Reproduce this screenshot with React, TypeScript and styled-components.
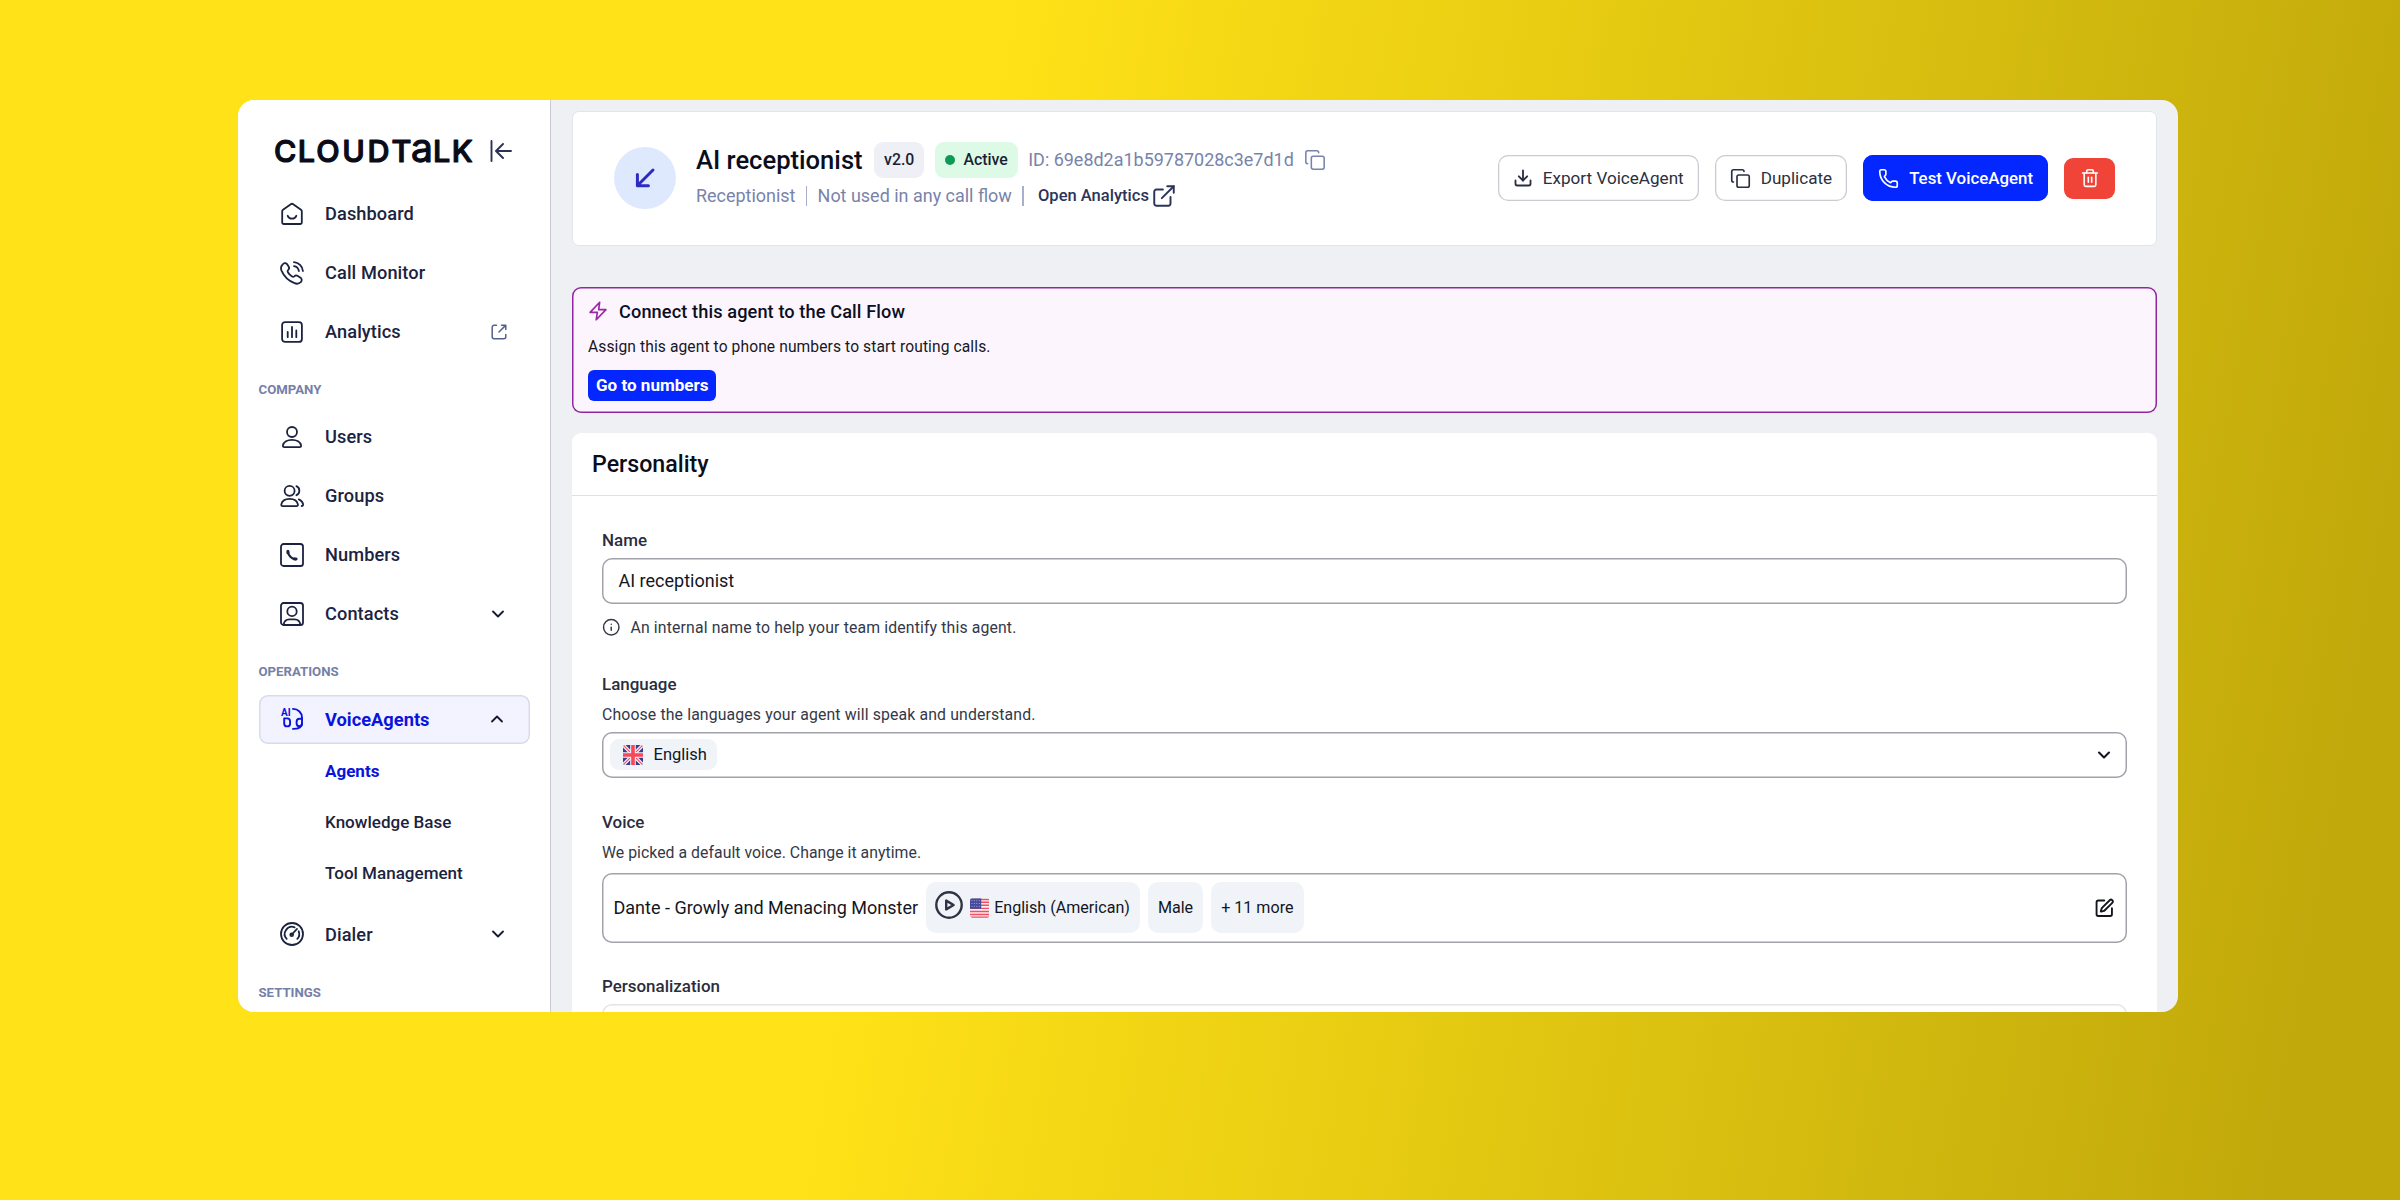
import React from "react";
import styled, { createGlobalStyle, css } from "styled-components";
import { Copy, ChevronDown, ChevronUp, Download, ExternalLink, Info, Phone, SquarePen, Trash2 } from "lucide-react";

const GlobalStyle = createGlobalStyle`
  * { box-sizing: border-box; }
  html, body { margin: 0; padding: 0; }
  body { font-family: Roboto, "Liberation Sans", sans-serif; color: #1c2340; }
  svg { display: block; flex: none; }
  button { font-family: inherit; margin: 0; }
`;

const Backdrop = styled.div`
  width: 2400px;
  height: 1200px;
  padding: 100px 222px 188px 238px;
  background: linear-gradient(100deg, #ffe217 38.5%, #c1a90b 95%);
`;

const Window = styled.div`
  display: flex;
  width: 100%;
  height: 100%;
  border-radius: 16px;
  overflow: hidden;
  background: #eef0f4;
`;

/* ---------- Sidebar ---------- */

const Sidebar = styled.aside`
  width: 313px;
  flex: none;
  padding: 0 20.5px 0 20.5px;
  background: #fff;
  border-right: 1px solid #c9cbd4;
`;

const SidebarHead = styled.div`
  display: flex;
  align-items: center;
  justify-content: space-between;
  height: 79px;
  padding: 23px 18px 0 16px;
`;

const SectionLabel = styled.div`
  height: 46.3px;
  padding-top: 26px;
  font-size: 13.2px;
  line-height: 16px;
  font-weight: 700;
  color: #7580a8;
`;

const NavItem = styled.div<{ $active?: boolean }>`
  display: flex;
  align-items: center;
  height: 49px;
  margin-top: 10px;
  padding: 0 ${(p) => (p.$active ? "21px 0 21px" : "20px 0 21px")};
  font-size: 18.2px;
  letter-spacing: 0.1px;
  font-weight: 500;
  ${(p) =>
    p.$active &&
    css`
      box-shadow: inset 0 0 0 1.4px #d9daea;
      border-radius: 9px;
      background: #f2f3ff;
      color: #0a14dc;
      font-weight: 700;
      font-size: 18.3px;
      letter-spacing: 0;
    `}
`;

const NavText = styled.span`
  flex: 1;
  margin-left: 21.5px;
`;

const NavTail = styled.span<{ $color?: string; $pad?: number }>`
  color: ${(p) => p.$color ?? "#141a33"};
  padding-right: ${(p) => p.$pad ?? 0}px;
`;

const SubList = styled.div`
  padding: 1.5px 0 1px 66.5px;
`;

const SubItem = styled.div<{ $active?: boolean }>`
  display: flex;
  align-items: center;
  height: 51.2px;
  font-size: 17.05px;
  font-weight: ${(p) => (p.$active ? 700 : 500)};
  color: ${(p) => (p.$active ? "#0a14dc" : "#1c2340")};
`;

/* ---------- Main ---------- */

const Main = styled.main`
  flex: 1;
  min-width: 0;
  padding: 11px 21px 0;
`;

const AgentHeader = styled.header`
  display: flex;
  align-items: center;
  height: 134.500px;
  padding: 0 41px;
  background: #fff;
  border: 1px solid #e2e4ec;
  border-radius: 7px;
`;

const Avatar = styled.div`
  display: grid;
  place-items: center;
  width: 62px;
  height: 62px;
  border-radius: 50%;
  background: #dfe9fd;
`;

const AgentInfo = styled.div`
  flex: 1;
  margin-left: 20px;
  margin-top: -1px;
`;

const InfoLine = styled.div`
  display: flex;
  align-items: center;
  height: 36px;
  font-size: 17.97px;
  color: #7983aa;
  white-space: nowrap;
`;

const AgentName = styled.h1`
  margin: 0 11.5px 0 0;
  font-size: 25.6px;
  font-weight: 500;
  color: #0a0e1c;
`;

const Badge = styled.span<{ $tone: "grey" | "green" }>`
  display: flex;
  align-items: center;
  gap: 8px;
  height: 36px;
  margin-right: 10.5px;
  padding: 0 10px;
  border-radius: 9px;
  background: ${(p) => (p.$tone === "green" ? "#dcfae6" : "#eff0f5")};
  font-size: 15.85px;
  font-weight: 500;
  color: #1a1f33;
`;

const Dot = styled.i`
  width: 10.500px;
  height: 10.500px;
  border-radius: 50%;
  background: #0d9a56;
`;

const CopyId = styled.span`
  margin-left: 10px;
`;

const Divider = styled.i`
  width: 1.5px;
  height: 20px;
  margin: 0 10.3px;
  background: #a9b0cb;
`;

const AnalyticsLink = styled.a`
  display: flex;
  align-items: center;
  gap: 2.500px;
  margin-left: 4px;
  font-size: 16.55px;
  font-weight: 500;
  color: #2c3558;
`;

const Actions = styled.div`
  display: flex;
  align-items: center;
  gap: 16px;
`;

const Button = styled.button<{ $primary?: boolean }>`
  display: flex;
  align-items: center;
  gap: 10px;
  height: 46px;
  padding: 0 15px;
  border: 0;
  box-shadow: inset 0 0 0 1.3px ${(p) => (p.$primary ? "#0527ff" : "#cbcbd1")};
  border-radius: 10px;
  background: ${(p) => (p.$primary ? "#0527ff" : "#fff")};
  color: ${(p) => (p.$primary ? "#fff" : "#2b2f40")};
  font-size: ${(p) => (p.$primary ? 16.85 : 17.1)}px;
  font-weight: ${(p) => (p.$primary ? 500 : 450)};
`;

const DeleteButton = styled.button`
  display: grid;
  place-items: center;
  width: 51px;
  height: 41.500px;
  padding: 0;
  border: 0;
  border-radius: 9px;
  background: #f04438;
  color: #fff;
`;

const Notice = styled.section`
  height: 126px;
  margin-top: 41.500px;
  padding: 13px 16px;
  box-shadow: inset 0 0 0 1.5px #8f279f;
  border-radius: 9px;
  background: #fdf5fe;
`;

const NoticeTitle = styled.div`
  display: flex;
  align-items: center;
  gap: 11px;
  height: 22px;
  font-size: 18.2px;
  letter-spacing: 0.1px;
  font-weight: 500;
  color: #0c0f1e;
`;

const NoticeText = styled.p`
  margin: 14px 0 12px;
  font-size: 15.600px;
  line-height: 22px;
  letter-spacing: 0.1px;
  color: #16181f;
`;

const NoticeButton = styled.button`
  display: block;
  height: 31px;
  padding: 0 8px;
  border: 0;
  border-radius: 6px;
  background: #0527ff;
  color: #fff;
  font-size: 17.05px;
  font-weight: 700;
  line-height: 31px;
`;

const Card = styled.section`
  height: 700px;
  margin-top: 20px;
  border-radius: 9px;
  background: #fff;
`;

const CardTitle = styled.h2`
  height: 63px;
  margin: 0;
  padding-left: 20px;
  border-bottom: 1.5px solid #dfe0e6;
  font-size: 23.2px;
  line-height: 63px;
  font-weight: 500;
  color: #0a0e1c;
`;

const CardBody = styled.div`
  padding: 32.500px 30px 0 30px;
`;

const Field = styled.div<{ $mb: number }>`
  margin-bottom: ${(p) => p.$mb}px;
`;

const Label = styled.div`
  height: 22px;
  font-size: 16.95px;
  line-height: 22px;
  font-weight: 500;
  color: #2a2d3d;
`;

const Help = styled.div<{ $mt: number; $spacing?: number }>`
  display: flex;
  align-items: center;
  gap: 10px;
  height: 22px;
  margin-top: ${(p) => p.$mt}px;
  font-size: 15.8px;
  letter-spacing: ${(p) => p.$spacing ?? 0}px;
  color: #343848;
`;

const Control = styled.div<{ $h: number; $mt: number; $pl: number; $light?: boolean }>`
  display: flex;
  align-items: center;
  height: ${(p) => p.$h}px;
  margin-top: ${(p) => p.$mt}px;
  padding: 0 13px 0 ${(p) => p.$pl}px;
  box-shadow: inset 0 0 0 1.5px ${(p) => (p.$light ? "#e4e4e8" : "#a1a2aa")};
  border-radius: 10px;
  font-size: 18px;
  color: #14161f;
`;

const LanguageChip = styled.span`
  display: flex;
  align-items: center;
  gap: 11px;
  height: 31px;
  padding: 0 10px 0 12.500px;
  border-radius: 9px;
  background: #f0f4f9;
  font-size: 16.5px;
`;

const VoiceChip = styled.span<{ $pl: number }>`
  display: flex;
  align-items: center;
  height: 51px;
  margin-left: 8px;
  padding: 0 10px 0 ${(p) => p.$pl}px;
  border-radius: 10px;
  background: #f0f3f8;
  font-size: 16.1px;
  font-weight: 450;
`;

const PlayWrap = styled.span`
  margin: 0 7px 6px 0;
`;

const FlagWrap = styled.span`
  margin-right: 5px;
`;

const ControlTail = styled.span`
  margin-left: auto;
`;

/* ---------- Drawings ---------- */

const Stroked = ({ size = 24, width = 1.8, color = "currentColor", box = 24, children }: any) => (
  <svg width={size} height={size} viewBox={`0 0 ${box} ${box}`} fill="none" stroke={color} strokeWidth={width} strokeLinecap="round" strokeLinejoin="round" overflow="visible">
    {children}
  </svg>
);

const Logo = () => (
  <svg width="199" height="24" viewBox="0 0 199 24" overflow="visible">
    <text y="23" x="-1 22.800 41.300 67.300 92.600 116.600" fontFamily="Inter, sans-serif" fontSize="30.5" fontWeight="500" fill="#0b0b18" stroke="#0b0b18" strokeWidth="1.2" strokeLinejoin="round">
      CLOUDT
      <tspan x="136" fontSize="39" fontWeight="400">a</tspan>
      <tspan x="158 176.800">LK</tspan>
    </text>
  </svg>
);

const CollapseIcon = () => (
  <Stroked size={22} box={22} width={1.9} color="#2b3152">
    <path d="M1.500 1v20M6.200 11h14.800M13 4l-7 7 7 7" />
  </Stroked>
);

const HomeIcon = () => (
  <Stroked>
    <path d="M2.200 9.300c0-.7.300-1.200.8-1.600l7.800-5.500c.7-.5 1.700-.5 2.400 0L21 7.700c.5.400.8.900.8 1.600v10.900c0 1-.8 1.800-1.800 1.800H4c-1 0-1.800-.8-1.800-1.800Z" />
    <path d="M7.700 13.800c.8 1.900 2.400 2.900 4.300 2.900s3.500-1 4.300-2.900" />
  </Stroked>
);

const CallIcon = () => (
  <Stroked>
    <path d="M2.800 3.300c1-1.400 3-1.600 4.200-.2l1.600 2.500c.8 1.200.5 2.600-.5 3.500-.7.7-.7 1.400-.2 2.200 1 1.800 2.400 3.200 4.200 4.300.8.500 1.500.4 2.200-.2.900-1 2.300-1.200 3.500-.4l2.800 1.800c1.400 1 1.500 3 .3 4.200-1.600 1.700-4 2.200-6.400 1.200C8.500 19.900 3.900 15.300 1.500 9.700.6 7.400 1 5 2.800 3.300Z" />
    <path d="M14 5.200c2.600.4 4.400 2.200 4.900 4.800M14 1.200c4.800.4 8.400 4 8.900 8.800" />
  </Stroked>
);

const ChartIcon = () => (
  <Stroked>
    <rect x="2.100" y="2.100" width="19.800" height="19.800" rx="3" />
    <path d="M7.700 12v5.200M12 7v10.200M16.300 10.500v6.700" />
  </Stroked>
);

const SmallExternalIcon = () => (
  <Stroked size={16} box={16} width={1.5}>
    <path d="M5.500 1.200H3.200a2 2 0 0 0-2 2v9.600a2 2 0 0 0 2 2h9.600a2 2 0 0 0 2-2v-2.300M10.500 1.200h4.300v4.300M14.600 1.400 8 8" />
  </Stroked>
);

const UserIcon = () => (
  <Stroked>
    <circle cx="12" cy="7" r="5" />
    <path d="M12 14.800c4.700 0 8.400 2.300 9.100 5.700.2 1-.4 1.700-1.400 1.700H4.300c-1 0-1.600-.7-1.400-1.700.7-3.400 4.400-5.700 9.100-5.700Z" />
  </Stroked>
);

const GroupIcon = () => (
  <Stroked>
    <circle cx="9.600" cy="6.800" r="5" />
    <path d="M9.600 14.800c4.200 0 7.600 2.200 8.300 5.600.2 1-.4 1.700-1.400 1.700H2.700c-1 0-1.600-.7-1.400-1.700.7-3.400 4.100-5.600 8.300-5.600ZM16.400 2.200a4.900 4.900 0 0 1 0 9M18.800 15.400c2.400.9 3.900 2.700 4.300 4.800.2 1.100-.3 1.800-1.400 1.800" />
  </Stroked>
);

const NumberIcon = () => (
  <Stroked>
    <rect x="1" y="1" width="22" height="22" rx="2.600" />
    <path d="M8 8.500c.3 4 3.400 7.300 7.600 7.700" strokeWidth="2.200" />
    <path d="M7.900 8.300v1.400M14.400 15.900l1.700.1" strokeWidth="3" />
  </Stroked>
);

const ContactIcon = () => (
  <Stroked>
    <rect x="1" y="1" width="22" height="22" rx="2.600" />
    <circle cx="12" cy="9.400" r="4.700" />
    <path d="M3.600 22.600c.6-3.500 2.600-5.300 5.600-5.300h5.600c3 0 5 1.800 5.600 5.300" />
  </Stroked>
);

const VoiceIcon = () => (
  <Stroked width={1.9}>
    <text x="1" y="8.600" fontFamily="Roboto, sans-serif" fontSize="10" fontWeight="700" fill="currentColor" stroke="none">AI</text>
    <path d="M13 1.900c5.200.1 9 3.900 9 8.600v6c0 3.300-3.500 5.400-9 5.400" />
    <path d="M4.200 11.400h2.900a3 3 0 0 1 3 3v2a2.950 2.950 0 0 1-5.900 0ZM22 11.800h-2.400a3 3 0 0 0-3 3v1.600a2.700 2.700 0 0 0 5.400 0" />
  </Stroked>
);

const DialIcon = () => (
  <Stroked>
    <circle cx="12" cy="12" r="11" />
    <path d="M6.700 16.900a7.200 7.200 0 0 1 7.900-11.600M18.700 9.300a7.200 7.200 0 0 1-1.400 7.600M11.800 12.500l5.200-5.600" />
    <circle cx="11.700" cy="12.800" r="1.400" />
  </Stroked>
);

const IncomingIcon = () => (
  <Stroked size={22} box={22} width={3} color="#2e2cbf">
    <path d="M19 3 4 18M3.400 7.500v11.200h11" />
  </Stroked>
);

const BoltIcon = () => (
  <Stroked size={20} width={2} color="#9a27a8">
    <path d="M14 1.500 2.500 13.600h8.700L9.900 22.500 21.500 10.400h-8.700Z" />
  </Stroked>
);

const PlayIcon = () => (
  <Stroked size={28} box={28} width={2.4} color="#2f3444">
    <circle cx="14" cy="14" r="12.700" />
    <path d="M11.200 9.600v8.800l7.400-4.400Z" />
  </Stroked>
);

const UKFlag = () => (
  <svg width="20" height="20" viewBox="0 0 20 20">
    <clipPath id="uk"><rect width="20" height="20" rx="2.500" /></clipPath>
    <g clipPath="url(#uk)">
      <rect width="20" height="20" fill="#343c90" />
      <path d="M0 0l20 20M20 0 0 20" stroke="#f3f1f6" strokeWidth="3.600" />
      <path d="M0 0l20 20M20 0 0 20" stroke="#f0586a" strokeWidth="1.200" />
      <path d="M10 0v20M0 10h20" stroke="#f6f2f6" strokeWidth="5.600" />
      <path d="M10 0v20M0 10h20" stroke="#f7475a" strokeWidth="3.600" />
    </g>
  </svg>
);

const USFlag = () => (
  <svg width="19.500" height="20" viewBox="0 0 20 20">
    <clipPath id="us"><rect width="20" height="20" rx="2.500" /></clipPath>
    <g clipPath="url(#us)">
      <rect width="20" height="20" fill="#f7eef1" />
      <path d="M0 1.200h20M0 4.200h20M0 7.200h20M0 10.400h20M0 13.500h20M0 16.600h20M0 19.500h20" stroke="#ee4f62" strokeWidth="1.500" />
      <rect width="11.500" height="10.800" fill="#434a9b" />
      <path d="M1.500 2.500h9M1.500 5.400h9M1.500 8.300h9" stroke="#a9aedd" strokeWidth="1" strokeDasharray="1 1.500" />
    </g>
  </svg>
);

const Chevron = () => <ChevronDown size={20} strokeWidth={2.200} />;

const NavRow = ({ icon, label, tail }: { icon: React.ReactNode; label: string; tail?: React.ReactNode }) => (
  <NavItem>
    {icon}
    <NavText>{label}</NavText>
    {tail}
  </NavItem>
);

export default function App() {
  return (
    <>
      <GlobalStyle />
      <Backdrop>
        <Window>
          <Sidebar>
            <SidebarHead>
              <Logo />
              <CollapseIcon />
            </SidebarHead>
            <NavRow icon={<HomeIcon />} label="Dashboard" />
            <NavRow icon={<CallIcon />} label="Call Monitor" />
            <NavRow icon={<ChartIcon />} label="Analytics" tail={<NavTail $color="#56608c" $pad={2.5}><SmallExternalIcon /></NavTail>} />
            <SectionLabel>COMPANY</SectionLabel>
            <NavRow icon={<UserIcon />} label="Users" />
            <NavRow icon={<GroupIcon />} label="Groups" />
            <NavRow icon={<NumberIcon />} label="Numbers" />
            <NavRow icon={<ContactIcon />} label="Contacts" tail={<NavTail $pad={1.5}><Chevron /></NavTail>} />
            <SectionLabel>OPERATIONS</SectionLabel>
            <NavItem $active>
              <VoiceIcon />
              <NavText>VoiceAgents</NavText>
              <NavTail $pad={1.5}><ChevronUp size={20} strokeWidth={2.200} /></NavTail>
            </NavItem>
            <SubList>
              <SubItem $active>Agents</SubItem>
              <SubItem>Knowledge Base</SubItem>
              <SubItem>Tool Management</SubItem>
            </SubList>
            <NavRow icon={<DialIcon />} label="Dialer" tail={<NavTail $pad={1.5}><Chevron /></NavTail>} />
            <SectionLabel>SETTINGS</SectionLabel>
          </Sidebar>

          <Main>
            <AgentHeader>
              <Avatar><IncomingIcon /></Avatar>
              <AgentInfo>
                <InfoLine>
                  <AgentName>AI receptionist</AgentName>
                  <Badge $tone="grey">v2.0</Badge>
                  <Badge $tone="green"><Dot />Active</Badge>
                  <span>ID: 69e8d2a1b59787028c3e7d1d</span>
                  <CopyId><Copy size={22} strokeWidth={1.700} /></CopyId>
                </InfoLine>
                <InfoLine>
                  Receptionist
                  <Divider />
                  Not used in any call flow
                  <Divider />
                  <AnalyticsLink>Open Analytics<ExternalLink size={26} strokeWidth={1.800} /></AnalyticsLink>
                </InfoLine>
              </AgentInfo>
              <Actions>
                <Button><Download size={20} strokeWidth={2.200} />Export VoiceAgent</Button>
                <Button><Copy size={21} strokeWidth={1.900} />Duplicate</Button>
                <Button $primary><Phone size={21} strokeWidth={1.900} />Test VoiceAgent</Button>
                <DeleteButton><Trash2 size={20} strokeWidth={1.900} /></DeleteButton>
              </Actions>
            </AgentHeader>

            <Notice>
              <NoticeTitle><BoltIcon />Connect this agent to the Call Flow</NoticeTitle>
              <NoticeText>Assign this agent to phone numbers to start routing calls.</NoticeText>
              <NoticeButton>Go to numbers</NoticeButton>
            </Notice>

            <Card>
              <CardTitle>Personality</CardTitle>
              <CardBody>
                <Field $mb={34.5}>
                  <Label>Name</Label>
                  <Control $h={46.5} $mt={7} $pl={16.5}>AI receptionist</Control>
                  <Help $mt={12} $spacing={0.14}><Info size={18.500} strokeWidth={1.900} />An internal name to help your team identify this agent.</Help>
                </Field>
                <Field $mb={32.500}>
                  <Label>Language</Label>
                  <Help $mt={8.5} $spacing={0.14}>Choose the languages your agent will speak and understand.</Help>
                  <Control $h={46.5} $mt={6.5} $pl={8}>
                    <LanguageChip><UKFlag />English</LanguageChip>
                    <ControlTail><ChevronDown size={20} strokeWidth={2.500} /></ControlTail>
                  </Control>
                </Field>
                <Field $mb={32.500}>
                  <Label>Voice</Label>
                  <Help $mt={8.5} $spacing={0.04}>We picked a default voice. Change it anytime.</Help>
                  <Control $h={69.5} $mt={10} $pl={11.5}>
                    Dante - Growly and Menacing Monster
                    <VoiceChip $pl={8.5}>
                      <PlayWrap><PlayIcon /></PlayWrap>
                      <FlagWrap><USFlag /></FlagWrap>
                      English (American)
                    </VoiceChip>
                    <VoiceChip $pl={10}>Male</VoiceChip>
                    <VoiceChip $pl={10}>+ 11 more</VoiceChip>
                    <ControlTail><SquarePen size={20.500} strokeWidth={2.200} /></ControlTail>
                  </Control>
                </Field>
                <Field $mb={0}>
                  <Label>Personalization</Label>
                  <Control $h={60} $mt={7} $pl={15} $light />
                </Field>
              </CardBody>
            </Card>
          </Main>
        </Window>
      </Backdrop>
    </>
  );
}
